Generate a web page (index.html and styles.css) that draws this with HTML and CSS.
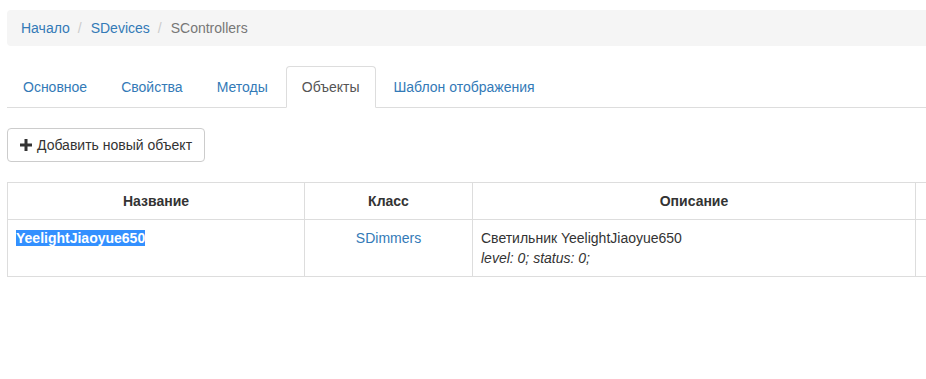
FILE: index.html
```html
<!DOCTYPE html>
<html lang="ru">
<head>
    <meta charset="UTF-8">
    <title>SControllers</title>
    <link rel="stylesheet" href="styles.css">
</head>
<body>
    <div class="page">
        <!-- Хлебные крошки -->
        <ol class="breadcrumb">
            <li><a href="#">Начало</a></li>
            <li><a href="#">SDevices</a></li>
            <li class="active">SControllers</li>
        </ol>

        <!-- Вкладки -->
        <ul class="nav-tabs">
            <li><a href="#">Основное</a></li>
            <li><a href="#">Свойства</a></li>
            <li><a href="#">Методы</a></li>
            <li class="active"><a href="#">Объекты</a></li>
            <li><a href="#">Шаблон отображения</a></li>
        </ul>

        <!-- Кнопка добавления -->
        <div class="toolbar">
            <button type="button" class="btn">
                <svg class="icon-plus" width="12" height="12" viewBox="0 0 12 12">
                    <path d="M4.5 0h3v4.5H12v3H7.5V12h-3V7.5H0v-3h4.5z" fill="#333"/>
                </svg>
                Добавить новый объект
            </button>
        </div>

        <!-- Таблица объектов -->
        <table class="table">
            <colgroup>
                <col class="col-name">
                <col class="col-class">
                <col class="col-desc">
                <col class="col-actions">
            </colgroup>
            <thead>
                <tr>
                    <th>Название</th>
                    <th>Класс</th>
                    <th>Описание</th>
                    <th></th>
                </tr>
            </thead>
            <tbody>
                <tr>
                    <td><b class="selected">YeelightJiaoyue650</b></td>
                    <td class="center"><a href="#">SDimmers</a></td>
                    <td>Светильник YeelightJiaoyue650<br><i>level: 0; status: 0;</i></td>
                    <td></td>
                </tr>
            </tbody>
        </table>
    </div>
</body>
</html>
```

FILE: styles.css
```css
/* Общие стили */
html, body {
    margin: 0;
    overflow: hidden;
}
body {
    font-family: "Liberation Sans", Arial, sans-serif;
    font-size: 14px;
    line-height: 20px;
    color: #333;
    background: #fff;
}
a {
    color: #337ab7;
    text-decoration: none;
}
.page {
    width: 1160px;
    padding: 10px 0 0 7px;
}

/* Хлебные крошки */
.breadcrumb {
    list-style: none;
    margin: 0 0 20px;
    padding: 8px 14px;
    background-color: #f5f5f5;
    border-radius: 4px 0 0 4px;
    display: flex;
}
.breadcrumb li + li::before {
    content: "/";
    color: #ccc;
    padding: 0 9px 0 8px;
}
.breadcrumb .active {
    color: #777;
}

/* Вкладки */
.nav-tabs {
    list-style: none;
    margin: 0;
    padding: 0;
    display: flex;
    border-bottom: 1px solid #ddd;
}
.nav-tabs li {
    margin: 0 2px -1px 0;
}
.nav-tabs a {
    display: block;
    padding: 10px 15px;
    border: 1px solid transparent;
    border-radius: 4px 4px 0 0;
}
.nav-tabs .active a {
    color: #555;
    background: #fff;
    border-color: #ddd #ddd transparent;
}

/* Панель с кнопкой */
.toolbar {
    margin: 20px 0 20px;
}
.btn {
    display: inline-flex;
    align-items: center;
    gap: 5px;
    font-family: inherit;
    font-size: 14px;
    line-height: 20px;
    color: #333;
    background: #fff;
    border: 1px solid #ccc;
    border-radius: 4px;
    padding: 6px 12px;
}
.icon-plus {
    margin-top: -1px;
}

/* Таблица */
.table {
    border-collapse: collapse;
    table-layout: fixed;
    width: 1120px;
}
.col-name { width: 297px; }
.col-class { width: 168px; }
.col-desc { width: 443px; }
.table th,
.table td {
    border: 1px solid #ddd;
    padding: 8px;
    vertical-align: top;
    text-align: left;
}
.table th {
    text-align: center;
    font-weight: bold;
}
.table .center {
    text-align: center;
}
.selected {
    background: #3390ff;
    color: #fff;
}
```
